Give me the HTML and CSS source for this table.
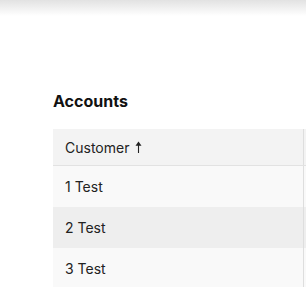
FILE: index.html
```html
<!DOCTYPE html>
<html lang="en">

<head>
  <meta charset="UTF-8">
  <meta name="viewport" content="width=device-width, initial-scale=1.0">
  <title>Accounts</title>
  <link rel="stylesheet" href="styles.css">
</head>

<body>
  <div class="top-shade"></div>
  <div id="wrapper">
    <h2 class="section-title">Accounts</h2>
    <div class="table-clip">
      <table class="accounts-table">
        <thead>
          <tr>
            <th class="col-customer">
              Customer
              <svg class="sort-arrow" width="7" height="12" viewBox="0 0 7 12">
                <path d="M3.5 0.5 L6.5 4.8 L0.5 4.8 Z" fill="#222" />
                <line x1="3.5" y1="3" x2="3.5" y2="12" stroke="#222" stroke-width="1.1" />
              </svg>
            </th>
            <th class="col-rest"></th>
          </tr>
        </thead>
        <tbody>
          <tr>
            <td class="col-customer">1 Test</td>
            <td class="col-rest"></td>
          </tr>
          <tr class="row-alt">
            <td class="col-customer">2 Test</td>
            <td class="col-rest"></td>
          </tr>
          <tr>
            <td class="col-customer">3 Test</td>
            <td class="col-rest"></td>
          </tr>
        </tbody>
      </table>
    </div>
  </div>
</body>

</html>
```

FILE: styles.css
```css
body {
  margin: 0;
  background-color: white;
  font-family: Inter, "Liberation Sans", sans-serif;
  color: #1a1a1a;
  overflow: hidden;
}

.top-shade {
  height: 16px;
  background: linear-gradient(to bottom, #e2e2e2, #ffffff);
}

#wrapper {
  padding-left: 53px;
  padding-top: 75px;
}

.section-title {
  font-size: 16px;
  font-weight: 700;
  line-height: 20px;
  margin: 0 0 18px 0;
  color: #111;
}

/* keeps the wide table inside the window */
.table-clip {
  overflow: hidden;
}

.accounts-table {
  border-collapse: collapse;
  width: 300px;
  font-size: 14px;
}

.accounts-table th,
.accounts-table td {
  text-align: left;
  font-weight: 400;
  padding: 0 0 0 12px;
  color: #222;
}

.accounts-table th {
  height: 36px;
  background-color: #f3f3f3;
  border-bottom: 1px solid #e2e2e2;
}

.accounts-table td {
  height: 41px;
  background-color: #f9f9f9;
}

.accounts-table .row-alt td {
  background-color: #eeeeee;
}

.col-customer {
  width: 238px;
  border-right: 1px solid #dedede;
}

.sort-arrow {
  margin-left: 2px;
  vertical-align: 0;
}
```
